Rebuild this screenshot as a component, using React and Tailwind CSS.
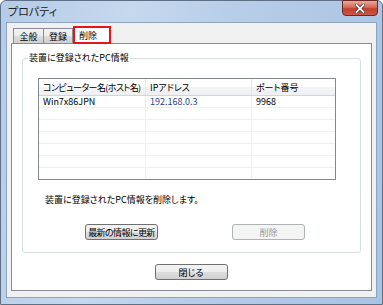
import React from "react";

const F = "font-['Noto_Sans_CJK_JP','Noto_Sans',sans-serif] [font-feature-settings:'palt'] whitespace-nowrap";

function WinButton({ children, disabled, className = "" }) {
  return (
    <div
      className={
        "h-[16px] w-[73px] flex items-center justify-center rounded-[3px] border text-[9px] leading-none overflow-hidden " +
        (disabled
          ? "border-[#adb2b5] bg-[#f4f4f4] text-[#9a9a9a] "
          : "border-[#707070] bg-[linear-gradient(180deg,#f4f4f4_0%,#ececec_50%,#dedede_50%,#d0d0d0_100%)] text-black ") +
        className
      }
    >
      {children}
    </div>
  );
}

export default function App() {
  const rows = [
    ["Win7x86JPN", "192.168.0.3", "9968"],
    ["", "", ""],
    ["", "", ""],
    ["", "", ""],
    ["", "", ""],
    ["", "", ""],
    ["", "", ""],
  ];
  return (
    <div className={"w-[383px] h-[305px] bg-white " + F}>
      <div className="relative w-full h-full flex flex-col rounded-t-[6px] border border-[#5f6f86] bg-[linear-gradient(100deg,#b4cbe7_0%,#c6d8ee_30%,#b7cde8_55%,#a9c3e3_100%)] px-[5px] pb-[6px]">
        {/* title bar */}
        <div className="h-[21px] flex items-center pl-[2px] text-[11px] text-[#202020]">
          プロパティ
        </div>
        {/* close button */}
        <div className="absolute top-[-1px] right-[4px] w-[36px] h-[16px] rounded-b-[4px] border border-[#6b2a24] bg-[linear-gradient(180deg,#e9a99c_0%,#d46a5a_45%,#c23e2c_55%,#c75a44_100%)] flex items-center justify-center">
          <svg width="10" height="9" viewBox="0 0 10 9">
            <path d="M1.5 1 L8.5 8 M8.5 1 L1.5 8" stroke="#4a1c18" strokeWidth="3.2" strokeLinecap="square" />
            <path d="M1.5 1 L8.5 8 M8.5 1 L1.5 8" stroke="#ffffff" strokeWidth="1.8" strokeLinecap="square" />
          </svg>
        </div>
        {/* client area */}
        <div className="flex-1 flex flex-col border border-[#8ea5c2] bg-[#f0f0f0] pt-[2px] pl-[4px] pr-[4px] pb-[6px]">
          {/* tabs */}
          <div className="flex items-end h-[19px] pl-[2px] -mb-px relative z-10">
            <div className="h-[15px] w-[31px] border border-[#898c95] border-b-0 bg-[linear-gradient(180deg,#f3f3f3_0%,#ebebeb_50%,#dddddd_50%,#cfcfcf_100%)] flex items-center justify-center text-[9px] leading-none mb-px">
              全般
            </div>
            <div className="h-[15px] w-[30px] -ml-px border border-[#898c95] border-b-0 bg-[linear-gradient(180deg,#f3f3f3_0%,#ebebeb_50%,#dddddd_50%,#cfcfcf_100%)] flex items-center justify-center text-[9px] leading-none mb-px">
              登録
            </div>
            <div className="h-[18px] w-[38px] border-2 border-[#e8141a] bg-white flex items-center pl-[4px] text-[9px] leading-none">
              削除
            </div>
          </div>
          {/* tab panel */}
          <div className="flex-1 flex flex-col border border-[#898c95] bg-white pt-[14px] px-[10px]">
            {/* group box */}
            <div className="relative border border-[#d5dfe5] rounded-[3px] pt-[19px] pl-[15px] pb-[12px]">
              <div className="absolute top-[-7px] left-[5px] bg-white px-[1px] text-[9px] leading-[12px] text-black">
                装置に登録されたPC情報
              </div>
              {/* table */}
              <div className="w-[298px] border border-[#828790] bg-white text-[9px] leading-none">
                <div className="flex h-[17px] border-b border-[#d5d5d5] bg-[linear-gradient(180deg,#ffffff_0%,#ffffff_50%,#f3f4f6_50%,#eef0f2_100%)]">
                  <div className="w-[107px] border-r border-[#e3e5e8] flex items-center pl-[4px] tracking-[-0.6px] overflow-hidden">コンピューター名(ホスト名)</div>
                  <div className="w-[106px] border-r border-[#e3e5e8] flex items-center pl-[4px]">IPアドレス</div>
                  <div className="flex-1 flex items-center pl-[4px]">ポート番号</div>
                </div>
                {rows.map((r, i) => (
                  <div
                    key={i}
                    className={"flex " + (i < rows.length - 1 ? "h-[12px] border-b border-[#f0f0f0]" : "h-[11px]")}
                  >
                    <div className="w-[107px] border-r border-[#f0f0f0] flex items-center pl-[4px] text-black">{r[0]}</div>
                    <div className="w-[106px] border-r border-[#f0f0f0] flex items-center pl-[4px] text-[#2b3f8c]">{r[1]}</div>
                    <div className="flex-1 flex items-center pl-[4px] text-black">{r[2]}</div>
                  </div>
                ))}
              </div>
              <div className="mt-[14px] pl-[7px] h-[12px] text-[9px] leading-[12px] text-black">
                装置に登録されたPC情報を削除します。
              </div>
              <div className="mt-[18px] flex pl-[47px] gap-[74px]">
                <WinButton className="tracking-[-0.6px]">最新の情報に更新</WinButton>
                <WinButton disabled>削除</WinButton>
              </div>
            </div>
            <div className="mt-[11px] flex justify-center pr-[1px]">
              <WinButton>閉じる</WinButton>
            </div>
          </div>
        </div>
      </div>
    </div>
  );
}
